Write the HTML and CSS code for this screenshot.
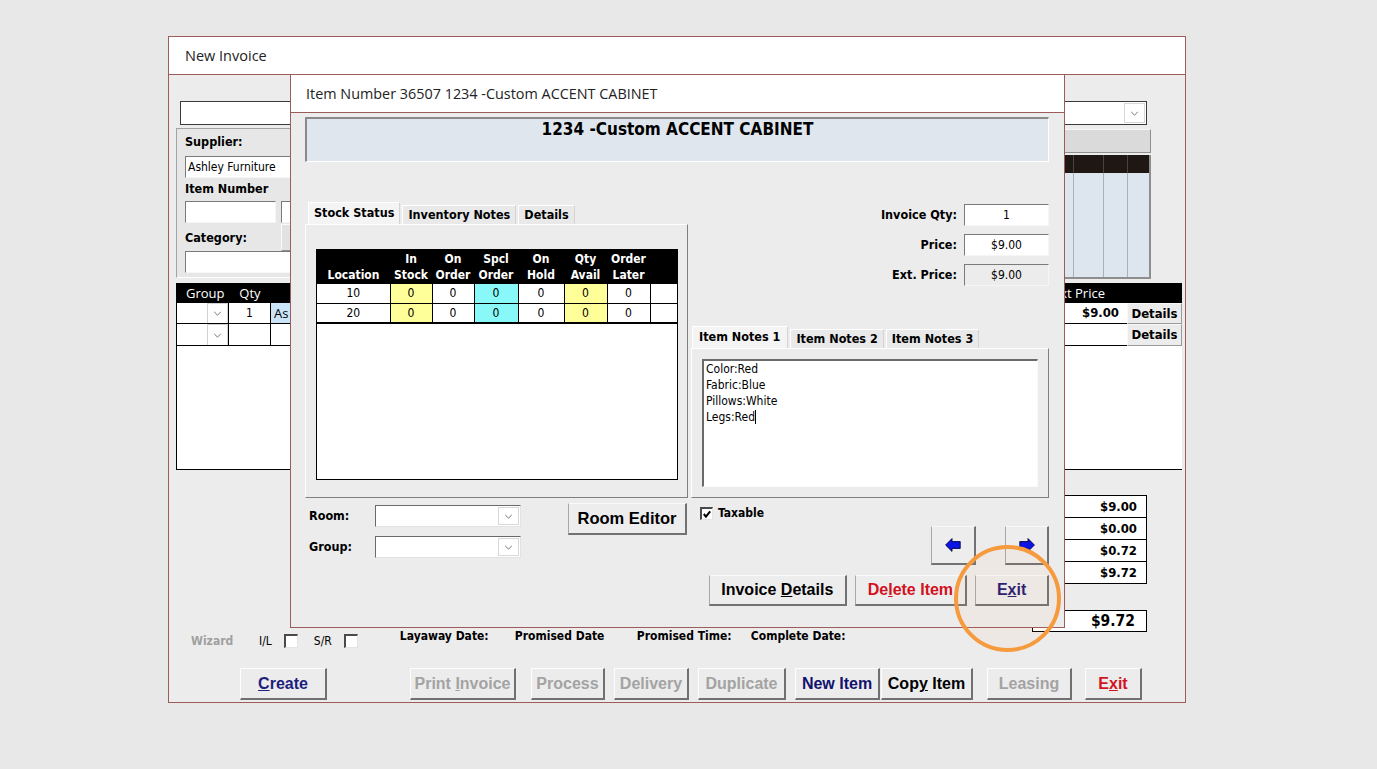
FILE: index.html
```html
<!DOCTYPE html>
<html lang="en">
<head>
    <meta charset="UTF-8">
    <meta name="viewport" content="width=device-width, initial-scale=1.0">
    <title>New Invoice</title>
    <link rel="stylesheet" href="styles.css">
</head>
<body>
    <div class="window">
        <div class="win-title">New Invoice</div>
        <div class="win-body">
            <div class="combo top-combo">
                <span class="combo-btn"><svg class="chev" viewBox="0 0 10 6"><polyline points="1,1 5,5 9,1"/></svg></span>
            </div>

            <div class="lookup-row">
                <div class="supplier-panel">
                    <div class="lbl">Supplier:</div>
                    <div class="field wide first">Ashley Furniture</div>
                    <div class="lbl item-lbl">Item Number</div>
                    <div class="pair">
                        <div class="field short"></div>
                        <div class="field short"></div>
                    </div>
                    <div class="cat-row">
                        <div class="lbl">Category:</div>
                        <div class="mini-btn"></div>
                    </div>
                    <div class="field wide"></div>
                </div>
                <div class="lookup-col">
                    <div class="lookup-bar"></div>
                    <div class="lookup-grid">
                        <span class="lh"></span><span class="lh"></span><span class="lh"></span><span class="lh"></span>
                        <span class="lb"></span><span class="lb"></span><span class="lb"></span><span class="lb"></span>
                    </div>
                </div>
            </div>

            <div class="lines">
                <div class="lrow lhead">
                    <span class="c-group">Group</span>
                    <span class="c-qty">Qty</span>
                    <span class="c-desc"></span>
                    <span class="c-ext">Ext Price</span>
                    <span class="c-det"></span>
                </div>
                <div class="lrow item">
                    <span class="c-group"><span class="drop"><svg class="chev" viewBox="0 0 10 6"><polyline points="1,1 5,5 9,1"/></svg></span></span>
                    <span class="c-qty">1</span>
                    <span class="c-desc selected">As</span>
                    <span class="c-ext">$9.00</span>
                    <span class="c-det"><span class="det-btn">Details</span></span>
                </div>
                <div class="lrow item second">
                    <span class="c-group"><span class="drop"><svg class="chev" viewBox="0 0 10 6"><polyline points="1,1 5,5 9,1"/></svg></span></span>
                    <span class="c-qty"></span>
                    <span class="c-desc"></span>
                    <span class="c-ext"></span>
                    <span class="c-det"><span class="det-btn">Details</span></span>
                </div>
            </div>

            <div class="totals">
                <div class="tot">$9.00</div>
                <div class="tot">$0.00</div>
                <div class="tot">$0.72</div>
                <div class="tot">$9.72</div>
            </div>
            <div class="grand">$9.72</div>

            <div class="status-row">
                <span class="wizard">Wizard</span>
                <span class="flag">I/L <span class="check"></span></span>
                <span class="flag sr">S/R <span class="check"></span></span>
                <div class="dates">
                    <span class="d-lay">Layaway Date:</span>
                    <span class="d-prom">Promised Date</span>
                    <span class="d-time">Promised Time:</span>
                    <span>Complete Date:</span>
                </div>
            </div>

            <div class="bar">
                <span class="bar-btn b-create"><u>C</u>reate</span>
                <span class="bar-btn b-print">Print <u>I</u>nvoice</span>
                <span class="bar-btn b-process">Process</span>
                <span class="bar-btn b-delivery">Delivery</span>
                <span class="bar-btn b-dup">Duplicate</span>
                <span class="bar-btn b-new">New Item</span>
                <span class="bar-btn b-copy">Cop<u>y</u> Item</span>
                <span class="bar-btn b-lease">Leasing</span>
                <span class="bar-btn b-exit">E<u>x</u>it</span>
            </div>
        </div>

        <div class="modal">
            <div class="modal-title">Item Number 36507 1234 -Custom ACCENT CABINET</div>
            <div class="modal-body">
                <div class="item-head">1234 -Custom ACCENT CABINET</div>
                <div class="cols">
                    <div class="col-left">
                        <div class="tabs">
                            <span class="tab active">Stock Status</span>
                            <span class="tab">Inventory Notes</span>
                            <span class="tab">Details</span>
                        </div>
                        <div class="tab-panel stock-panel">
                            <div class="stock">
                                <table>
                                    <thead>
                                        <tr>
                                            <th>Location</th>
                                            <th>In<br>Stock</th>
                                            <th>On<br>Order</th>
                                            <th>Spcl<br>Order</th>
                                            <th>On<br>Hold</th>
                                            <th>Qty<br>Avail</th>
                                            <th>Order<br>Later</th>
                                            <th></th>
                                        </tr>
                                    </thead>
                                    <tbody>
                                        <tr>
                                            <td>10</td><td class="y">0</td><td>0</td><td class="c">0</td><td>0</td><td class="y">0</td><td>0</td><td></td>
                                        </tr>
                                        <tr>
                                            <td>20</td><td class="y">0</td><td>0</td><td class="c">0</td><td>0</td><td class="y">0</td><td>0</td><td></td>
                                        </tr>
                                    </tbody>
                                </table>
                            </div>
                        </div>
                        <div class="room-row">
                            <div class="room-fields">
                                <span class="lbl">Room:</span>
                                <div class="combo"><span class="combo-btn"><svg class="chev" viewBox="0 0 10 6"><polyline points="1,1 5,5 9,1"/></svg></span></div>
                                <span class="lbl">Group:</span>
                                <div class="combo"><span class="combo-btn"><svg class="chev" viewBox="0 0 10 6"><polyline points="1,1 5,5 9,1"/></svg></span></div>
                            </div>
                            <span class="btn room-editor">Room Editor</span>
                        </div>
                    </div>

                    <div class="col-right">
                        <div class="qty-grid">
                            <span class="lbl">Invoice Qty:</span>
                            <div class="field">1</div>
                            <span class="lbl">Price:</span>
                            <div class="field">$9.00</div>
                            <span class="lbl">Ext. Price:</span>
                            <div class="field ro">$9.00</div>
                        </div>
                        <div class="tabs notes-tabs">
                            <span class="tab active">Item Notes 1</span>
                            <span class="tab">Item Notes 2</span>
                            <span class="tab">Item Notes 3</span>
                        </div>
                        <div class="tab-panel notes-panel">
                            <div class="notes">
                                <div>Color:Red</div>
                                <div>Fabric:Blue</div>
                                <div>Pillows:White</div>
                                <div>Legs:Red<span class="caret"></span></div>
                            </div>
                        </div>
                        <div class="taxable">
                            <span class="check"><svg viewBox="0 0 11 11"><path d="M2 5.5 L4.3 8.3 L9 2.5"/></svg></span>
                            Taxable
                        </div>
                        <div class="arrows">
                            <span class="arrow-btn"><svg viewBox="0 0 16 14"><polygon points="0.6,7 7,0.6 7,3.6 15.2,3.6 15.2,10.4 7,10.4 7,13.4"/></svg></span>
                            <span class="arrow-btn"><svg viewBox="0 0 16 14"><polygon points="15.4,7 9,0.6 9,3.6 0.8,3.6 0.8,10.4 9,10.4 9,13.4"/></svg></span>
                        </div>
                        <div class="actions">
                            <span class="btn b-details">Invoice <u>D</u>etails</span>
                            <span class="btn b-delete">De<u>l</u>ete Item</span>
                            <span class="btn b-leave">E<u>x</u>it</span>
                        </div>
                    </div>
                </div>
            </div>
        </div>

        <div class="callout"></div>
    </div>
</body>
</html>
```

FILE: styles.css
```css
:root {
    --frame: #9d5c5c;
    --face: #ececec;
    --tah: "DejaVu Sans Condensed", "DejaVu Sans", sans-serif;
    --seg: "Open Sans", "Noto Sans", sans-serif;
    --arial: "Liberation Sans", Arial, sans-serif;
}
* {
    box-sizing: border-box;
}
body {
    margin: 0;
    background: #e8e8e8;
    font-family: var(--tah);
    font-size: 12px;
    color: #000;
}
.window {
    position: relative;
    width: 1018px;
    height: 667px;
    margin: 36px 0 0 168px;
    border: 1px solid var(--frame);
    background: var(--face);
    overflow: hidden;
}
.win-title {
    height: 38px;
    padding-left: 16px;
    background: #fff;
    border-bottom: 1px solid var(--frame);
    font: 14.5px/37px var(--seg);
    color: #222;
}
.win-body {
    display: flex;
    flex-direction: column;
    padding-top: 26px;
}

/* combo boxes and fields */
.combo {
    display: flex;
    justify-content: flex-end;
    height: 22px;
    padding: 1px;
    background: #fff;
    border: 1px solid;
    border-color: #6a6a6a #e2e2e2 #e2e2e2 #6a6a6a;
}
.combo-btn {
    width: 21px;
    display: flex;
    align-items: center;
    justify-content: center;
    border: 1px solid #d8d8d8;
    background: #fff;
}
.chev {
    width: 9px;
    height: 5px;
    fill: none;
    stroke: #5a5a5a;
    stroke-width: 1;
}
.top-combo {
    width: 967px;
    height: 24px;
    margin-left: 11px;
    border-color: #3a3a3a;
}
.lbl {
    font-weight: bold;
    font-size: 12.5px;
    line-height: 16px;
}
.field {
    height: 22px;
    padding: 0 2px;
    background: #fff;
    border: 1px solid;
    border-color: #7a7a7a #f6f6f6 #f6f6f6 #7a7a7a;
    font-size: 12px;
    line-height: 20px;
    white-space: nowrap;
}

/* supplier lookup behind the dialog */
.lookup-row {
    display: flex;
    height: 150px;
    margin-top: 3px;
}
.supplier-panel {
    display: flex;
    flex-direction: column;
    width: 520px;
    margin-left: 7px;
    padding: 5px 0 0 8px;
    background: #e7e7e7;
    border: 1px solid;
    border-color: #a3a3a3 #fff #fff #a3a3a3;
}
.supplier-panel .wide {
    width: 300px;
}
.supplier-panel .first {
    margin-top: 6px;
}
.item-lbl {
    margin-top: 3px;
}
.pair {
    display: flex;
    gap: 5px;
    margin-top: 4px;
}
.pair .short {
    width: 91px;
}
.cat-row {
    display: flex;
    align-items: center;
    height: 27px;
    margin-top: 1px;
}
.cat-row .lbl {
    width: 96px;
}
.mini-btn {
    width: 60px;
    height: 27px;
    background: #e2e2e2;
    border: 1px solid;
    border-color: #fafafa #8e8e8e #8e8e8e #fafafa;
}
.lookup-col {
    width: 450px;
    margin: 0 34px 0 auto;
}
.lookup-bar {
    height: 24px;
    margin-top: 1px;
    background: #dadada;
    border: 1px solid;
    border-color: #f7f7f7 #8f8f8f #8f8f8f #f7f7f7;
}
.lookup-grid {
    display: grid;
    grid-template-columns: 372px 30px 24px 1fr;
    grid-template-rows: 18px 1fr;
    height: 124px;
    margin-top: 2px;
    background: #dde5ee;
    border-right: 2px solid #8e8e8e;
    border-bottom: 2px solid #8e8e8e;
}
.lookup-grid .lh {
    background: #1e1713;
    border-left: 1px solid #4a4440;
}
.lookup-grid .lb {
    border-left: 1px solid #aab0b6;
}
.lookup-grid span:nth-child(4n+1) {
    border-left: 0;
}

/* invoice lines */
.lines {
    width: 1006px;
    height: 187px;
    margin: 5px 0 0 7px;
    background: #fff;
    border-left: 1px solid #000;
    border-bottom: 1px solid #000;
}
.lrow {
    display: grid;
    grid-template-columns: 52px 42px 1fr 77px 55px;
}
.lrow > span {
    white-space: nowrap;
    overflow: hidden;
}
.lhead {
    height: 20px;
    background: #000;
    color: #fff;
    font: 13px/20px var(--seg);
}
.lhead .c-group {
    padding-left: 9px;
}
.c-qty {
    text-align: center;
}
.lhead .c-ext {
    padding-left: 3px;
}
.item {
    height: 21px;
}
.item.second {
    height: 22px;
}
.item > span {
    border-bottom: 1px solid #000;
    line-height: 20px;
}
.item .c-group,
.item .c-qty {
    border-right: 1px solid #000;
}
.item .c-group {
    display: flex;
    justify-content: flex-end;
}
.drop {
    width: 21px;
    display: flex;
    align-items: center;
    justify-content: center;
    border: 1px solid #d2d2d2;
    border-bottom: 0;
}
.item .c-desc {
    padding-left: 3px;
    font: 13px/20px var(--seg);
}
.selected {
    background: #cce4f7;
}
.item .c-ext {
    text-align: right;
    padding-right: 8px;
    font-weight: bold;
    font-size: 13px;
}
.item .c-det {
    border-bottom: 0;
}
.det-btn {
    display: block;
    height: 100%;
    background: #ececec;
    border: 1px solid;
    border-color: #f8f8f8 #9a9a9a #9a9a9a #f8f8f8;
    text-align: center;
    font-weight: bold;
    font-size: 13px;
    line-height: 19px;
}

/* totals */
.totals {
    align-self: flex-end;
    width: 84px;
    margin: 25px 38px 0 0;
}
.tot {
    height: 23px;
    margin-top: -1px;
    padding-right: 9px;
    background: #fff;
    border: 1px solid #000;
    text-align: right;
    font-weight: bold;
    font-size: 13px;
    line-height: 21px;
}
.tot:first-child {
    margin-top: 0;
}
.grand {
    align-self: flex-end;
    width: 115px;
    height: 22px;
    margin: 26px 38px 0 0;
    padding-right: 11px;
    background: #fff;
    border: 1px solid #000;
    text-align: right;
    font-weight: bold;
    font-size: 15.5px;
    line-height: 20px;
}

/* status line */
.status-row {
    display: flex;
    align-items: flex-start;
    height: 18px;
}
.wizard {
    width: 68px;
    margin: 1px 0 0 22px;
    color: #a0a0a0;
    font-weight: bold;
    line-height: 16px;
}
.flag {
    display: flex;
    align-items: center;
    gap: 12px;
    height: 16px;
    margin-top: 1px;
    font-size: 12px;
}
.flag.sr {
    margin-left: 16px;
}
.check {
    display: flex;
    align-items: center;
    justify-content: center;
    width: 14px;
    height: 14px;
    background: #fff;
    border: 1px solid;
    border-color: #4a4a4a #e4e4e4 #e4e4e4 #4a4a4a;
    border-width: 2px 1px 1px 2px;
}
.check svg {
    width: 10px;
    height: 10px;
    fill: none;
    stroke: #000;
    stroke-width: 2.2;
}
.dates {
    display: flex;
    margin: -3px 0 0 42px;
    font-weight: bold;
    line-height: 14px;
}
.d-lay {
    width: 115px;
}
.d-prom {
    width: 122px;
}
.d-time {
    width: 114px;
}

/* bottom buttons */
.bar {
    display: flex;
    height: 32px;
    margin-top: 18px;
}
.bar-btn {
    height: 32px;
    background: #ececec;
    border: solid;
    border-width: 1px 2px 2px 1px;
    border-color: #fdfdfd #707070 #707070 #fdfdfd;
    text-align: center;
    white-space: nowrap;
    font: bold 16px/29px var(--arial);
    color: #a3a3a3;
}
.b-create { width: 87px; margin-left: 71px; color: #1e1e7e; }
.b-print { width: 106px; margin-left: 83px; }
.b-process { width: 74px; margin-left: 15px; }
.b-delivery { width: 75px; margin-left: 9px; }
.b-dup { width: 88px; margin-left: 9px; }
.b-new { width: 85px; margin-left: 9px; color: #12126e; }
.b-copy { width: 92px; margin-left: 1px; color: #000; }
.b-lease { width: 85px; margin-left: 14px; }
.b-exit { width: 57px; margin-left: 13px; color: #d2141e; }

/* item dialog */
.modal {
    position: absolute;
    left: 121px;
    top: 37px;
    width: 775px;
    height: 554px;
    background: var(--face);
    border: 1px solid var(--frame);
}
.modal-title {
    height: 38px;
    padding-left: 15px;
    background: #fff;
    border-bottom: 1px solid var(--frame);
    font: 14.4px/37px var(--seg);
    color: #222;
}
.modal-body {
    padding: 4px 15px 0 14px;
}
.item-head {
    height: 45px;
    background: #dfe6ee;
    border: solid;
    border-width: 2px 1px 1px 2px;
    border-color: #8a8a8a #fff #fff #8a8a8a;
    text-align: center;
    font-weight: bold;
    font-size: 17px;
    line-height: 20px;
}
.cols {
    display: grid;
    grid-template-columns: 383px 358px;
    column-gap: 3px;
}
.tabs {
    display: flex;
    align-items: flex-end;
    gap: 2px;
    height: 22px;
    margin-top: 40px;
    padding-left: 3px;
}
.tab {
    height: 19px;
    padding: 0 5px;
    background: #e9e9e9;
    border: solid;
    border-width: 1px 1px 0 1px;
    border-color: #fff #d4d4d4 #fff #fff;
    font-weight: bold;
    font-size: 12.5px;
    line-height: 18px;
    white-space: nowrap;
}
.tab.active {
    height: 22px;
    background: #f4f4f4;
    line-height: 20px;
}
.notes-tabs {
    padding-left: 1px;
}
.notes-tabs .tab.active {
    padding: 0 7px 0 6px;
}
.tab-panel {
    border: 1px solid;
    border-color: #fff #7f7f7f #7f7f7f #fff;
}
.stock-panel {
    height: 274px;
    padding: 24px 0 0 10px;
}
.stock {
    width: 362px;
    height: 231px;
    background: #fff;
    border: 1px solid #000;
}
.stock table {
    width: 100%;
    border-collapse: collapse;
    table-layout: fixed;
}
.stock th {
    height: 33px;
    padding: 0;
    background: #000;
    color: #fff;
    font-weight: bold;
    font-size: 12px;
    line-height: 16px;
    vertical-align: bottom;
}
.stock th:nth-child(1) { width: 73px; }
.stock th:nth-child(2) { width: 42px; }
.stock th:nth-child(3) { width: 42px; }
.stock th:nth-child(4) { width: 44px; }
.stock th:nth-child(5) { width: 46px; }
.stock th:nth-child(6) { width: 43px; }
.stock th:nth-child(7) { width: 43px; }
.stock td {
    height: 20px;
    padding: 0;
    border: 1px solid #000;
    text-align: center;
    font-size: 12px;
}
.stock td:first-child {
    border-left: 0;
}
.stock td:last-child {
    border-right: 0;
}
.stock tr + tr td {
    border-bottom-width: 2px;
}
.stock .y {
    background: #ffff99;
}
.stock .c {
    background: #88f8f8;
}
.room-row {
    display: flex;
    align-items: flex-start;
    margin-top: 5px;
}
.room-fields {
    display: grid;
    grid-template-columns: 66px 146px;
    row-gap: 9px;
    align-items: center;
    margin: 2px 0 0 4px;
}
.btn {
    background: #ededed;
    border: solid;
    border-width: 1px 2px 2px 1px;
    border-color: #f9f9f9 #727272 #727272 #a8a8a8;
    text-align: center;
    white-space: nowrap;
    font: bold 16px/28px var(--arial);
    color: #000;
}
.room-editor {
    width: 119px;
    height: 32px;
    margin-left: 47px;
    font-size: 16.5px;
    line-height: 29px;
}
.qty-grid {
    display: grid;
    grid-template-columns: auto 85px;
    justify-content: end;
    align-items: center;
    column-gap: 7px;
    row-gap: 8px;
    margin-top: 42px;
}
.qty-grid .lbl {
    text-align: right;
}
.qty-grid .field {
    text-align: center;
}
.field.ro {
    background: #ececec;
}
.notes-panel {
    height: 150px;
    padding: 10px;
}
.notes {
    height: 128px;
    padding: 0 2px;
    background: #fff;
    border: solid;
    border-width: 2px 1px 1px 2px;
    border-color: #6a6a6a #fafafa #fafafa #6a6a6a;
    font-size: 12px;
    line-height: 16px;
}
.caret {
    display: inline-block;
    width: 1px;
    height: 14px;
    background: #000;
    vertical-align: -3px;
}
.taxable {
    display: flex;
    align-items: center;
    gap: 5px;
    height: 14px;
    margin: 8px 0 0 9px;
    font-weight: bold;
}
.taxable .check {
    width: 13px;
    height: 13px;
}
.arrows {
    display: flex;
    justify-content: flex-end;
    gap: 29px;
    margin-top: 6px;
}
.arrow-btn {
    display: flex;
    align-items: center;
    justify-content: center;
    width: 45px;
    height: 39px;
    background: #ededed;
    border: solid;
    border-width: 1px 2px 2px 1px;
    border-color: #f9f9f9 #727272 #727272 #a8a8a8;
}
.arrow-btn + .arrow-btn {
    width: 44px;
}
.arrow-btn svg {
    width: 16px;
    height: 14px;
    fill: #0a14e6;
    stroke: #00003c;
    stroke-width: 0.9;
}
.actions {
    display: flex;
    gap: 8px;
    margin: 10px 0 0 18px;
}
.actions .btn {
    height: 31px;
}
.b-details { width: 138px; }
.b-delete { width: 113px; color: #d3111f; }
.b-leave { width: 74px; color: #251a74; }

/* highlight circle from the screenshot */
.callout {
    position: absolute;
    left: 785px;
    top: 508px;
    width: 107px;
    height: 107px;
    border: 4px solid #f69a3e;
    border-radius: 50%;
    background: rgba(246, 154, 62, 0.05);
}
```
